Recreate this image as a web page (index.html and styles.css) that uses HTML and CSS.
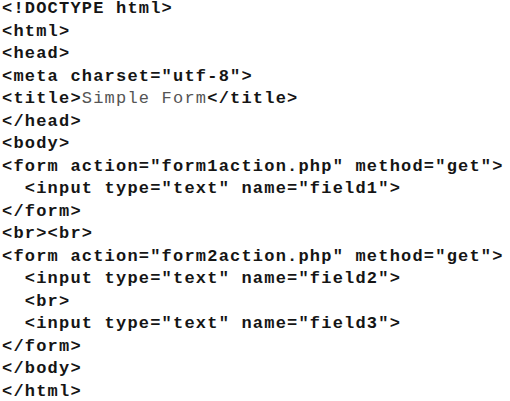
FILE: index.html
```html
<!DOCTYPE html>
<html>
<head>
<meta charset="utf-8">
<link rel="stylesheet" href="styles.css">
</head>
<body>
<pre class="code">&lt;!DOCTYPE html&gt;
&lt;html&gt;
&lt;head&gt;
&lt;meta charset="utf-8"&gt;
&lt;title&gt;<span class="plain">Simple Form</span>&lt;/title&gt;
&lt;/head&gt;
&lt;body&gt;
&lt;form action="form1action.php" method="get"&gt;
  &lt;input type="text" name="field1"&gt;
&lt;/form&gt;
&lt;br&gt;&lt;br&gt;
&lt;form action="form2action.php" method="get"&gt;
  &lt;input type="text" name="field2"&gt;
  &lt;br&gt;
  &lt;input type="text" name="field3"&gt;
&lt;/form&gt;
&lt;/body&gt;
&lt;/html&gt;</pre>
</body>
</html>
```
FILE: styles.css
```css
html, body {
  margin: 0;
  padding: 0;
  background: #ffffff;
}
.code {
  margin: -2px 0 0 2px;
  font-family: "Liberation Mono", "Courier New", monospace;
  font-weight: bold;
  font-size: 17px;
  letter-spacing: 1.2px;
  line-height: 22.5px;
  color: #151515;
  white-space: pre;
}
.plain {
  font-weight: normal;
  color: #555555;
}
```
